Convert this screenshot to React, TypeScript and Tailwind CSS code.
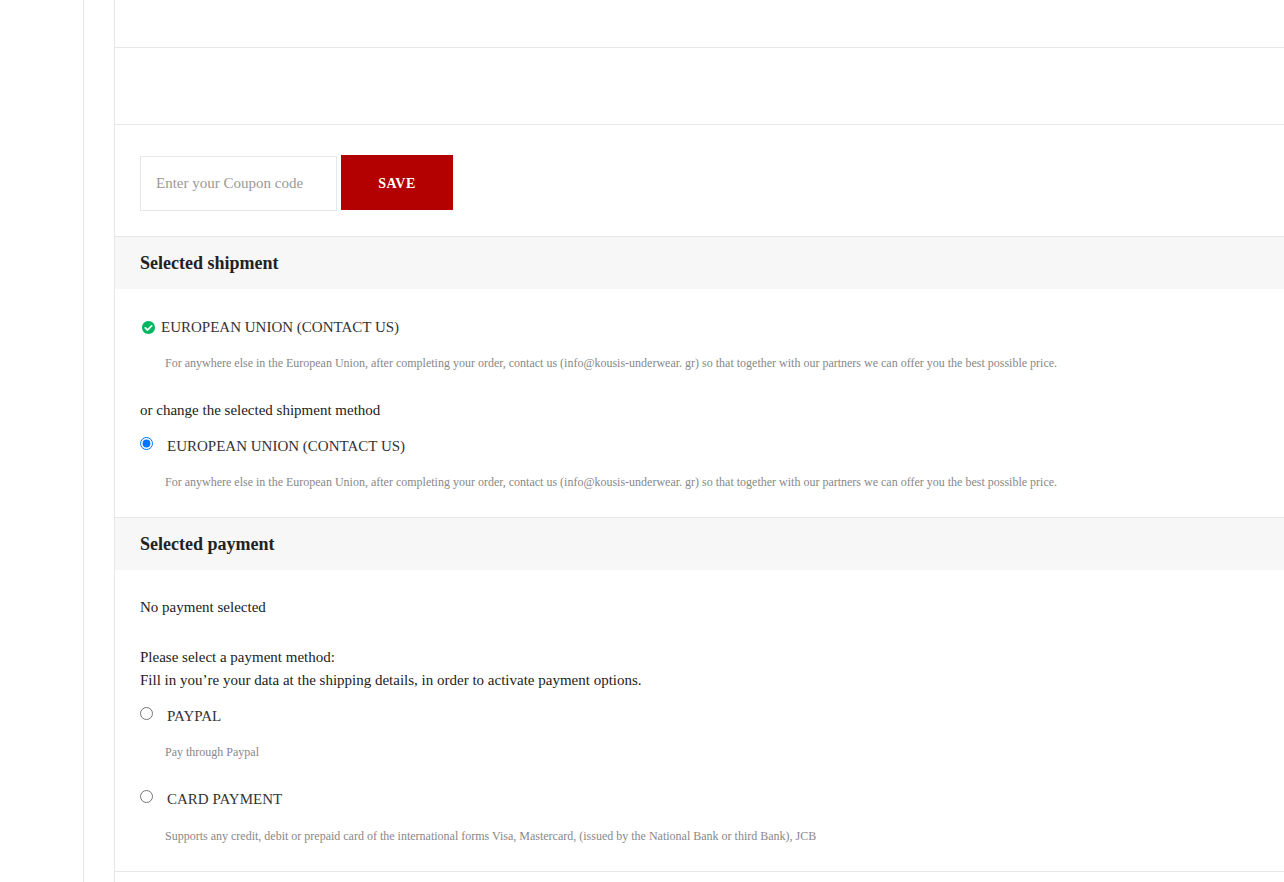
import React from 'react';

const shipmentNote =
  'For anywhere else in the European Union, after completing your order, contact us (info@kousis-underwear. gr) so that together with our partners we can offer you the best possible price.';

function SectionHeader({ title }: { title: string }) {
  return (
    <div className="h-[53px] border-t border-[#e7e7e7] bg-[#f7f7f7] pl-[25px] flex items-center">
      <h2 className="text-[18px] font-bold text-[#222]">{title}</h2>
    </div>
  );
}

function RadioOption({ label, note, checked }: { label: string; note: string; checked?: boolean }) {
  return (
    <div>
      <label className="flex h-[23px] items-center text-[15px] text-[#333]">
        <input
          type="radio"
          name={label}
          defaultChecked={checked}
          className="m-0 h-[13px] w-[13px] -translate-y-[3px]"
        />
        <span className="ml-[14px]">{label}</span>
      </label>
      <p className="mt-[15px] ml-[25px] text-xs leading-[18px] text-[#888]">{note}</p>
    </div>
  );
}

export default function App() {
  return (
    <div className="flex h-[882px] overflow-hidden bg-white font-['Liberation_Serif',serif]">
      <div className="w-[84px] shrink-0 border-r border-[#e7e7e7]" />
      <div className="w-[31px] shrink-0 border-r border-[#e7e7e7]" />

      <main className="min-w-0 flex-1">
        <div className="h-[48px] border-b border-[#e7e7e7]" />
        <div className="h-[77px] border-b border-[#e7e7e7]" />

        <div className="flex h-[111px] items-start pt-[30px] pl-[25px]">
          <input
            type="text"
            placeholder="Enter your Coupon code"
            className="mt-px h-[55px] w-[197px] border border-[#e7e7e7] px-[15px] text-[15px] outline-none placeholder:text-[#999]"
          />
          <button className="ml-[4px] h-[55px] w-[112px] bg-[#b30000] pt-[2px] text-sm font-bold tracking-[0.5px] text-white">
            SAVE
          </button>
        </div>

        <SectionHeader title="Selected shipment" />
        <section className="h-[228px] pt-[27px] pl-[25px]">
          <div className="flex h-[22px] items-center pl-[2px] text-[15px] text-[#333]">
            <svg viewBox="8 8 496 496" className="h-[13px] w-[13px] fill-[#00b760]">
              <path d="M504 256c0 136.967-111.033 248-248 248S8 392.967 8 256 119.033 8 256 8s248 111.033 248 248zM227.314 387.314l184-184c6.248-6.248 6.248-16.379 0-22.627l-22.627-22.627c-6.248-6.249-16.379-6.249-22.628 0L216 308.118l-70.059-70.059c-6.248-6.248-16.379-6.248-22.628 0l-22.627 22.627c-6.248 6.248-6.248 16.379 0 22.627l104 104c6.249 6.249 16.379 6.249 22.628.001z" />
            </svg>
            <span className="ml-[6px]">EUROPEAN UNION (CONTACT US)</span>
          </div>
          <p className="mt-[16px] ml-[25px] text-xs leading-[18px] text-[#888]">{shipmentNote}</p>
          <p className="mt-[27px] h-[23px] text-[15px] leading-[23px] text-[#222]">or change the selected shipment method</p>
          <div className="mt-[13px]">
            <RadioOption label="EUROPEAN UNION (CONTACT US)" note={shipmentNote} checked />
          </div>
        </section>

        <SectionHeader title="Selected payment" />
        <section className="h-[302px] border-b border-[#e7e7e7] pt-[26px] pl-[25px]">
          <p className="h-[23px] text-[15px] leading-[23px] text-[#222]">No payment selected</p>
          <p className="mt-[27px] text-[15px] leading-[23px] text-[#222]">
            Please select a payment method:
            <br />
            Fill in you’re your data at the shipping details, in order to activate payment options.
          </p>
          <div className="mt-[13px]">
            <RadioOption label="PAYPAL" note="Pay through Paypal" />
          </div>
          <div className="mt-[27px] [&_p]:mt-[16px]">
            <RadioOption
              label="CARD PAYMENT"
              note="Supports any credit, debit or prepaid card of the international forms Visa, Mastercard, (issued by the National Bank or third Bank), JCB"
            />
          </div>
        </section>
      </main>
    </div>
  );
}
